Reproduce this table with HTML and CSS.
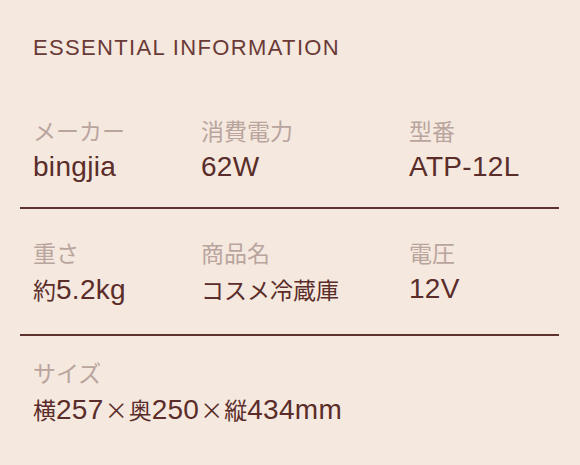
FILE: index.html
```html
<!DOCTYPE html>
<html lang="ja">
<head>
<meta charset="utf-8">
<link rel="stylesheet" href="styles.css">
</head>
<body>
<main class="info">
  <h2 class="title">ESSENTIAL INFORMATION</h2>
  <section class="group">
    <div class="item"><div class="label">メーカー</div><div class="value">bingjia</div></div>
    <div class="item"><div class="label">消費電力</div><div class="value">62W</div></div>
    <div class="item"><div class="label">型番</div><div class="value">ATP-12L</div></div>
  </section>
  <section class="group mixed">
    <div class="item"><div class="label">重さ</div><div class="value"><span class="ja">約</span>5.2kg</div></div>
    <div class="item"><div class="label">商品名</div><div class="value"><span class="ja">コスメ冷蔵庫</span></div></div>
    <div class="item"><div class="label">電圧</div><div class="value">12V</div></div>
  </section>
  <section class="group last">
    <div class="item wide"><div class="label">サイズ</div><div class="value"><span class="ja">横</span>257<span class="ja times">×</span><span class="ja">奥</span>250<span class="ja times">×</span><span class="ja">縦</span>434mm</div></div>
  </section>
</main>
</body>
</html>
```
FILE: styles.css
```css
html, body {
  margin: 0;
  padding: 0;
  background: #f5e8df;
}
.info {
  padding: 37px 21px 0 20px;
  font-family: "Liberation Sans", Arial, "Noto Sans CJK JP", sans-serif;
}
.title {
  margin: 0 0 56px;
  padding-left: 13px;
  font-size: 22px;
  line-height: 22px;
  font-weight: 400;
  letter-spacing: 1.35px;
  color: #6a3a37;
}
.group {
  display: grid;
  grid-template-columns: 168px 208px 1fr;
  padding: 0 0 22px 13px;
  border-bottom: 2px solid #5e322e;
  margin-bottom: 28px;
}
.group.mixed {
  padding-bottom: 26px;
  margin-bottom: 21px;
}
.group.last {
  border-bottom: none;
  margin-bottom: 0;
}
.wide {
  grid-column: 1 / -1;
}
.label {
  font-family: "Noto Sans CJK JP", sans-serif;
  font-size: 23px;
  line-height: 30px;
  color: #b9a59d;
}
.value {
  margin-top: 4px;
  font-size: 28px;
  line-height: 36px;
  letter-spacing: 0.3px;
  color: #5a2d2a;
}
.ja {
  font-family: "Noto Sans CJK JP", sans-serif;
  font-size: 23px;
  letter-spacing: 0;
}
.times {
  margin: 0 1px;
}
```
